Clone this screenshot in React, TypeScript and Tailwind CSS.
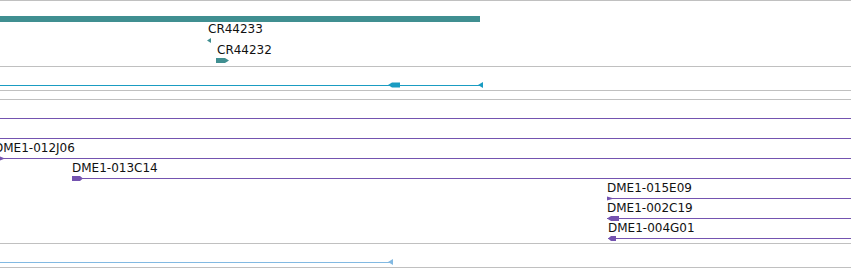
import type { ReactNode } from 'react';

const teal = '#408f91';
const cyan = '#1a9cc2';
const purple = '#7453b0';
const sky = '#82b9e2';

type FeatureProps = {
  x: number;
  w: number;
  h?: number;
  label?: string;
  labelX?: number;
  gapClass?: string;
  children: ReactNode;
};

// one feature row: label line above a small svg glyph
function Feature({ x, w, h = 5, label, labelX = 0, gapClass = 'mt-px', children }: FeatureProps) {
  return (
    <div className="flex flex-col shrink-0" style={{ marginLeft: x, width: w }}>
      {label !== undefined && (
        <div
          className="h-[14px] text-[12px] leading-[14px] text-[#111] whitespace-nowrap font-['DejaVu_Sans',sans-serif]"
          style={{ marginLeft: labelX }}
        >
          {label}
        </div>
      )}
      <svg width={w} height={h} className={`block overflow-visible ${label !== undefined ? gapClass : ''}`}>
        {children}
      </svg>
    </div>
  );
}

function Sep() {
  return <div className="h-px bg-[#c0c0c0] shrink-0" />;
}

type Clone = { name: string; x: number; labelX?: number; glyph?: string };

const clones: Clone[] = [
  { name: '', x: 0 },
  { name: '', x: 0 },
  { name: 'DME1-012J06', x: 0, labelX: -6, glyph: '0,0.5 5,2.5 0,4.5' },
  { name: 'DME1-013C14', x: 72, glyph: '0,0 8,0 11,2.5 8,5 0,5' },
  { name: 'DME1-015E09', x: 607, glyph: '0,0.5 7,2.5 0,4.5' },
  { name: 'DME1-002C19', x: 607, glyph: '0,2.5 4,0 12,0 12,5 4,5' },
  { name: 'DME1-004G01', x: 608, glyph: '0,2.5 3,0 8,0 8,5 3,5' },
];

export default function App() {
  return (
    <div className="w-[851px] h-[268px] bg-white overflow-hidden flex flex-col">
      <Sep />

      {/* gene track */}
      <div className="h-[65px] shrink-0 flex flex-col pt-[15px]">
        <div className="h-[6px] w-[480px] bg-[#408f91]" />
        <Feature x={207} w={4} label="CR44233" labelX={1} gapClass="mt-0.5">
          <polygon points="4,0 0,2.5 4,5" fill={teal} />
        </Feature>
        <Feature x={216} w={13} label="CR44232" labelX={1}>
          <polygon points="0,0 9,0 13,2.5 9,5 0,5" fill={teal} />
        </Feature>
      </div>
      <Sep />

      {/* transcript track */}
      <div className="h-[23px] shrink-0 flex flex-col pt-[15px]">
        <Feature x={0} w={483} h={6}>
          <line x1={0} y1={3.5} x2={482} y2={3.5} stroke={cyan} />
          <polygon points="388,3 392,0.5 400,0.5 400,5.5 392,5.5" fill={cyan} />
          <polygon points="483,0 478,3 483,6" fill={cyan} />
        </Feature>
      </div>
      <Sep />

      {/* empty track */}
      <div className="h-[8px] shrink-0" />
      <Sep />

      {/* clone track */}
      <div className="h-[143px] shrink-0 flex flex-col pt-px">
        {clones.map((c, i) => (
          <Feature key={i} x={c.x} w={851 - c.x} label={c.name} labelX={c.labelX}>
            <line x1={0} y1={2.5} x2={851 - c.x} y2={2.5} stroke={purple} />
            {c.glyph && <polygon points={c.glyph} fill={purple} />}
          </Feature>
        ))}
      </div>
      <Sep />

      {/* cDNA track */}
      <div className="h-[23px] shrink-0 flex flex-col pt-[15px]">
        <Feature x={0} w={393} h={6}>
          <line x1={0} y1={3.5} x2={392} y2={3.5} stroke={sky} />
          <polygon points="393,0 388,3 393,6" fill={sky} />
        </Feature>
      </div>
      <Sep />
    </div>
  );
}
